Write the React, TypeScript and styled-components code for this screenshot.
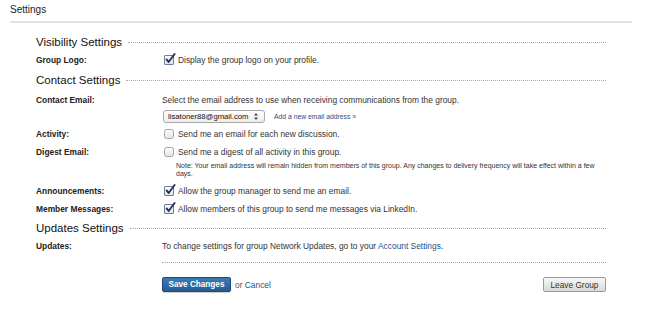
import styled, { createGlobalStyle } from "styled-components";

const GlobalStyle = createGlobalStyle`
  html, body {
    margin: 0;
    padding: 0;
    background: #fff;
  }
  body {
    font-family: "Liberation Sans", Arial, sans-serif;
    color: #333;
  }
`;

const Page = styled.div`
  width: 649px;
  height: 313px;
  overflow: hidden;
  background: #fff;
`;

const Header = styled.div`
  margin: 0 17px 0 10px;
  padding: 4px 0 5px;
  border-bottom: 2px solid #e2e2e2;
  font-size: 10px;
  line-height: 12px;
  color: #222;
`;

const Main = styled.div`
  padding: 12px 43px 0 36px;
`;

const SectionHead = styled.div<{ $top: number }>`
  display: flex;
  align-items: center;
  margin-top: ${(p) => p.$top}px;
  font-size: 11.5px;
  line-height: 14px;
  color: #111;
`;

const DottedRule = styled.div<{ $indent?: number }>`
  flex: 1;
  margin-left: ${(p) => p.$indent ?? 6}px;
  border-top: 1px dotted #aaa;
`;

const Row = styled.div<{ $top: number }>`
  display: grid;
  grid-template-columns: 126px 1fr;
  margin-top: ${(p) => p.$top}px;
  font-size: 8.4px;
  line-height: 12px;
`;

const Label = styled.div`
  font-weight: bold;
  color: #222;
`;

const Value = styled.div`
  color: #333;
`;

const CheckLine = styled.label`
  display: flex;
  align-items: center;
  gap: 4px;
  margin-left: 2px;
`;

const Box = styled.span<{ $checked: boolean }>`
  position: relative;
  width: 8px;
  height: 8px;
  border: 1px solid ${(p) => (p.$checked ? "#6d7f96" : "#a4a4a4")};
  border-radius: ${(p) => (p.$checked ? 1 : 2.5)}px;
  background: linear-gradient(#fdfdfd, #e4e4e4);
  flex-shrink: 0;

  svg {
    position: absolute;
    left: 0;
    top: -3px;
  }
`;

const EmailPick = styled.div`
  display: flex;
  align-items: center;
  gap: 9px;
  margin-top: 4px;
`;

const Select = styled.div`
  display: flex;
  align-items: center;
  justify-content: space-between;
  box-sizing: border-box;
  width: 102px;
  height: 13px;
  margin-left: 1px;
  padding: 0 6px 0 4px;
  border: 1px solid #a8a8a8;
  border-radius: 3px;
  background: linear-gradient(#ffffff, #ececec);
  font-size: 7.7px;
  color: #111;
`;

const SmallLink = styled.a`
  font-size: 6.8px;
  color: #1f4f87;
  text-decoration: none;
`;

const Link = styled.a`
  color: #1f4f87;
  text-decoration: none;
`;

const Note = styled.div`
  max-width: 428px;
  margin: 4px 0 0 14px;
  font-size: 7px;
  line-height: 8px;
  color: #333;
`;

const Footer = styled.div`
  display: flex;
  justify-content: space-between;
  align-items: center;
  margin: 14px 0 0 126px;
`;

const Actions = styled.div`
  display: flex;
  align-items: center;
  gap: 4px;
  font-size: 8.4px;
  color: #555;
`;

const PrimaryButton = styled.button`
  box-sizing: border-box;
  height: 15px;
  width: 69px;
  padding: 0;
  border: 1px solid #1b4a77;
  border-radius: 2px;
  background: linear-gradient(#3c7cb3, #235b91);
  color: #fff;
  font-family: "Liberation Sans", Arial, sans-serif;
  font-weight: bold;
  font-size: 8.2px;
  box-shadow: 0 1px 1px rgba(0, 0, 0, 0.2);
`;

const GrayButton = styled.button`
  box-sizing: border-box;
  height: 15px;
  width: 63px;
  padding: 0;
  border: 1px solid #9a9a9a;
  border-radius: 2px;
  background: linear-gradient(#f7f7f7, #d9d9d9);
  color: #333;
  font-family: "Liberation Sans", Arial, sans-serif;
  font-size: 8.3px;
`;

const Check = ({ checked, children }: { checked: boolean; children: React.ReactNode }) => (
  <CheckLine>
    <Box $checked={checked}>
      {checked && (
        <svg width="11" height="11" viewBox="0 0 11 11">
          <path d="M1.6 6.4 L3.6 9 L9.6 1" fill="none" stroke="#1d2d5c" strokeWidth="1.8" strokeLinecap="round" strokeLinejoin="round" />
        </svg>
      )}
    </Box>
    <span>{children}</span>
  </CheckLine>
);

export default function App() {
  return (
    <Page>
      <GlobalStyle />
      <Header>Settings</Header>
      <Main>
        <SectionHead $top={0}>
          Visibility Settings
          <DottedRule />
        </SectionHead>
        <Row $top={5}>
          <Label>Group Logo:</Label>
          <Value>
            <Check checked>Display the group logo on your profile.</Check>
          </Value>
        </Row>

        <SectionHead $top={7}>
          Contact Settings
          <DottedRule />
        </SectionHead>
        <Row $top={7}>
          <Label>Contact Email:</Label>
          <Value>
            Select the email address to use when receiving communications from the group.
            <EmailPick>
              <Select>
                lisatoner88@gmail.com
                <svg width="4" height="7" viewBox="0 0 4 7">
                  <path d="M0 2.6 L2 0 L4 2.6 Z M0 4.4 L2 7 L4 4.4 Z" fill="#444" />
                </svg>
              </Select>
              <SmallLink href="#">Add a new email address »</SmallLink>
            </EmailPick>
          </Value>
        </Row>
        <Row $top={5}>
          <Label>Activity:</Label>
          <Value>
            <Check checked={false}>Send me an email for each new discussion.</Check>
          </Value>
        </Row>
        <Row $top={6}>
          <Label>Digest Email:</Label>
          <Value>
            <Check checked={false}>Send me a digest of all activity in this group.</Check>
            <Note>
              Note: Your email address will remain hidden from members of this group. Any changes to delivery
              frequency will take effect within a few days.
            </Note>
          </Value>
        </Row>
        <Row $top={7}>
          <Label>Announcements:</Label>
          <Value>
            <Check checked>Allow the group manager to send me an email.</Check>
          </Value>
        </Row>
        <Row $top={6}>
          <Label>Member Messages:</Label>
          <Value>
            <Check checked>Allow members of this group to send me messages via LinkedIn.</Check>
          </Value>
        </Row>

        <SectionHead $top={6}>
          Updates Settings
          <DottedRule />
        </SectionHead>
        <Row $top={5}>
          <Label>Updates:</Label>
          <Value>
            To change settings for group Network Updates, go to your <Link href="#">Account Settings</Link>.
          </Value>
        </Row>
        <SectionHead $top={10}>
          <DottedRule $indent={126} />
        </SectionHead>

        <Footer>
          <Actions>
            <PrimaryButton>Save Changes</PrimaryButton>
            <span>
              or <Link href="#">Cancel</Link>
            </span>
          </Actions>
          <GrayButton>Leave Group</GrayButton>
        </Footer>
      </Main>
    </Page>
  );
}
